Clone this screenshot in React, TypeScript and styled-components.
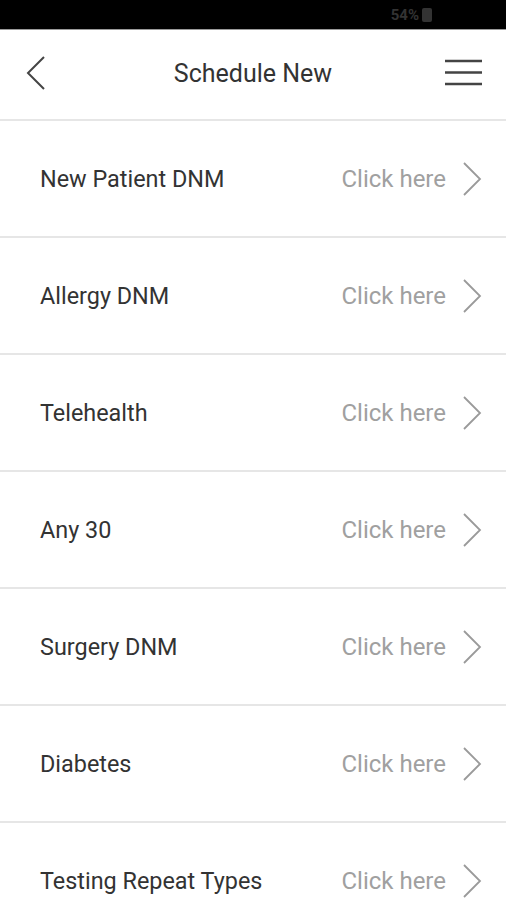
import React from 'react';
import styled, { createGlobalStyle } from 'styled-components';

const GlobalStyle = createGlobalStyle`
  html, body {
    margin: 0;
    padding: 0;
    background: #ffffff;
    font-family: Roboto, "Liberation Sans", Arial, sans-serif;
  }
`;

const Screen = styled.div`
  width: 506px;
  height: 900px;
  overflow: hidden;
  background: #ffffff;
`;

const StatusBar = styled.div`
  height: 29px;
  background: #000000;
  border-bottom: 1px solid #9a9a9a;
  display: flex;
  align-items: center;
  justify-content: flex-end;
  padding-right: 74px;
  gap: 3px;
  color: #333333;
  font-size: 15px;
  font-weight: 700;
`;

const Battery = styled.span`
  width: 10px;
  height: 14px;
  border-radius: 2px;
  background: #333333;
`;

const Header = styled.header`
  height: 86px;
  padding-bottom: 3px;
  display: grid;
  grid-template-columns: 80px 1fr 80px;
  align-items: center;
  border-bottom: 2px solid #e6e6e6;
`;

const Title = styled.h1`
  margin: 0;
  text-align: center;
  font-size: 25px;
  font-weight: 400;
  color: #333333;
`;

const IconSlot = styled.div<{ $align: 'start' | 'end' }>`
  display: flex;
  justify-content: ${(p) => (p.$align === 'start' ? 'flex-start' : 'flex-end')};
  padding: ${(p) => (p.$align === 'start' ? '0 0 0 26px' : '0 24px 0 0')};
`;

const List = styled.ul`
  list-style: none;
  margin: 0;
  padding: 0;
`;

const Row = styled.li`
  height: 115px;
  display: flex;
  align-items: center;
  padding: 0 24px 0 40px;
  border-bottom: 2px solid #e6e6e6;
`;

const Label = styled.span`
  flex: 1;
  font-size: 23.4px;
  color: #333333;
`;

const Action = styled.span`
  font-size: 24px;
  color: #a0a0a0;
  margin-right: 16px;
`;

const BackIcon = () => (
  <svg width="20" height="34" viewBox="0 0 20 34" fill="none">
    <path d="M18 1 L2 17 L18 33" stroke="#444" strokeWidth="2" />
  </svg>
);

const MenuIcon = () => (
  <svg width="37" height="28" viewBox="0 0 37 28" fill="none">
    <path d="M0 2 H37 M0 13.5 H37 M0 25 H37" stroke="#444" strokeWidth="2.4" />
  </svg>
);

const ChevronIcon = () => (
  <svg width="20" height="34" viewBox="0 0 20 34" fill="none">
    <path d="M2 1 L18 17 L2 33" stroke="#9a9a9a" strokeWidth="1.8" />
  </svg>
);

const items = [
  'New Patient DNM',
  'Allergy DNM',
  'Telehealth',
  'Any 30',
  'Surgery DNM',
  'Diabetes',
  'Testing Repeat Types',
];

export default function App() {
  return (
    <Screen>
      <GlobalStyle />
      <StatusBar>
        <span>54%</span>
        <Battery />
      </StatusBar>
      <Header>
        <IconSlot $align="start"><BackIcon /></IconSlot>
        <Title>Schedule New</Title>
        <IconSlot $align="end"><MenuIcon /></IconSlot>
      </Header>
      <List>
        {items.map((item) => (
          <Row key={item}>
            <Label>{item}</Label>
            <Action>Click here</Action>
            <ChevronIcon />
          </Row>
        ))}
      </List>
    </Screen>
  );
}
